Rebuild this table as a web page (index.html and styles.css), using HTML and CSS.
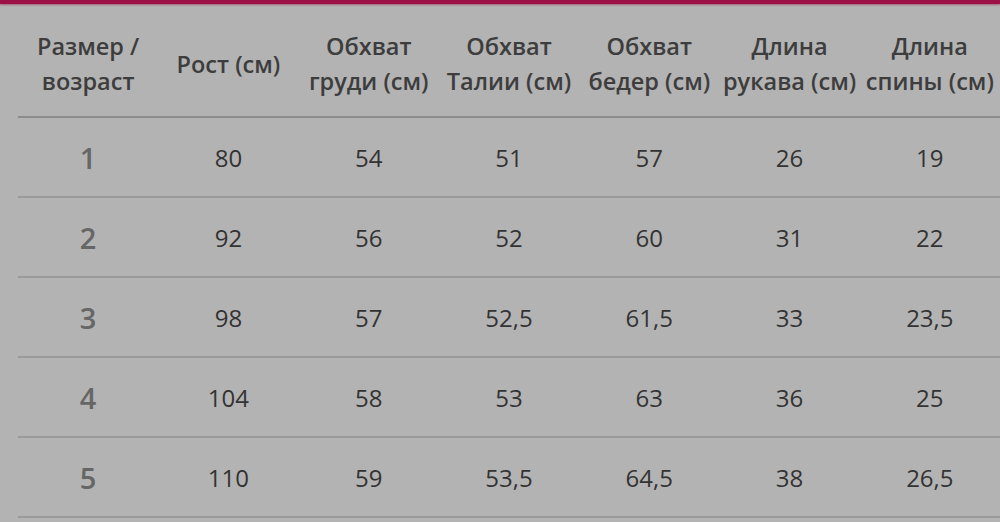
FILE: index.html
```html
<!DOCTYPE html>
<html lang="ru">
<head>
<meta charset="utf-8">
<link rel="stylesheet" href="styles.css">
</head>
<body>
<div class="topbar"></div>
<table class="sizes">
  <thead>
    <tr>
      <th>Размер /<br>возраст</th>
      <th>Рост (см)</th>
      <th>Обхват<br>груди (см)</th>
      <th>Обхват<br>Талии (см)</th>
      <th>Обхват<br>бедер (см)</th>
      <th>Длина<br>рукава (см)</th>
      <th>Длина<br>спины (см)</th>
    </tr>
  </thead>
  <tbody>
    <tr><td class="n">1</td><td>80</td><td>54</td><td>51</td><td>57</td><td>26</td><td>19</td></tr>
    <tr><td class="n">2</td><td>92</td><td>56</td><td>52</td><td>60</td><td>31</td><td>22</td></tr>
    <tr><td class="n">3</td><td>98</td><td>57</td><td>52,5</td><td>61,5</td><td>33</td><td>23,5</td></tr>
    <tr><td class="n">4</td><td>104</td><td>58</td><td>53</td><td>63</td><td>36</td><td>25</td></tr>
    <tr><td class="n">5</td><td>110</td><td>59</td><td>53,5</td><td>64,5</td><td>38</td><td>26,5</td></tr>
  </tbody>
</table>
</body>
</html>
```
FILE: styles.css
```css
html, body {
  margin: 0;
  padding: 0;
  background: #b3b3b3;
  width: 1000px;
  height: 522px;
  overflow: hidden;
  font-family: "Open Sans", "DejaVu Sans", sans-serif;
}
.topbar {
  height: 4px;
  background: #9b1046;
  box-shadow: 0 1px 2px rgba(155, 16, 70, 0.5);
}
.sizes {
  margin-left: 18px;
  width: 982px;
  border-collapse: collapse;
  table-layout: fixed;
}
.sizes th {
  width: 140px;
  box-sizing: border-box;
  height: 113px;
  padding: 8px 0 0 0;
  font-size: 23.5px;
  font-weight: 600;
  line-height: 35px;
  color: #3d3d3d;
  text-align: center;
  vertical-align: middle;
  white-space: nowrap;
  border-bottom: 2px solid #8c8c8c;
}
.sizes td {
  box-sizing: border-box;
  height: 80px;
  padding: 0;
  font-size: 24px;
  color: #333;
  text-align: center;
  vertical-align: middle;
  border-bottom: 2px solid #9a9a9a;
}
.sizes td.n {
  font-size: 29px;
  font-weight: 600;
  color: #666;
}
```
